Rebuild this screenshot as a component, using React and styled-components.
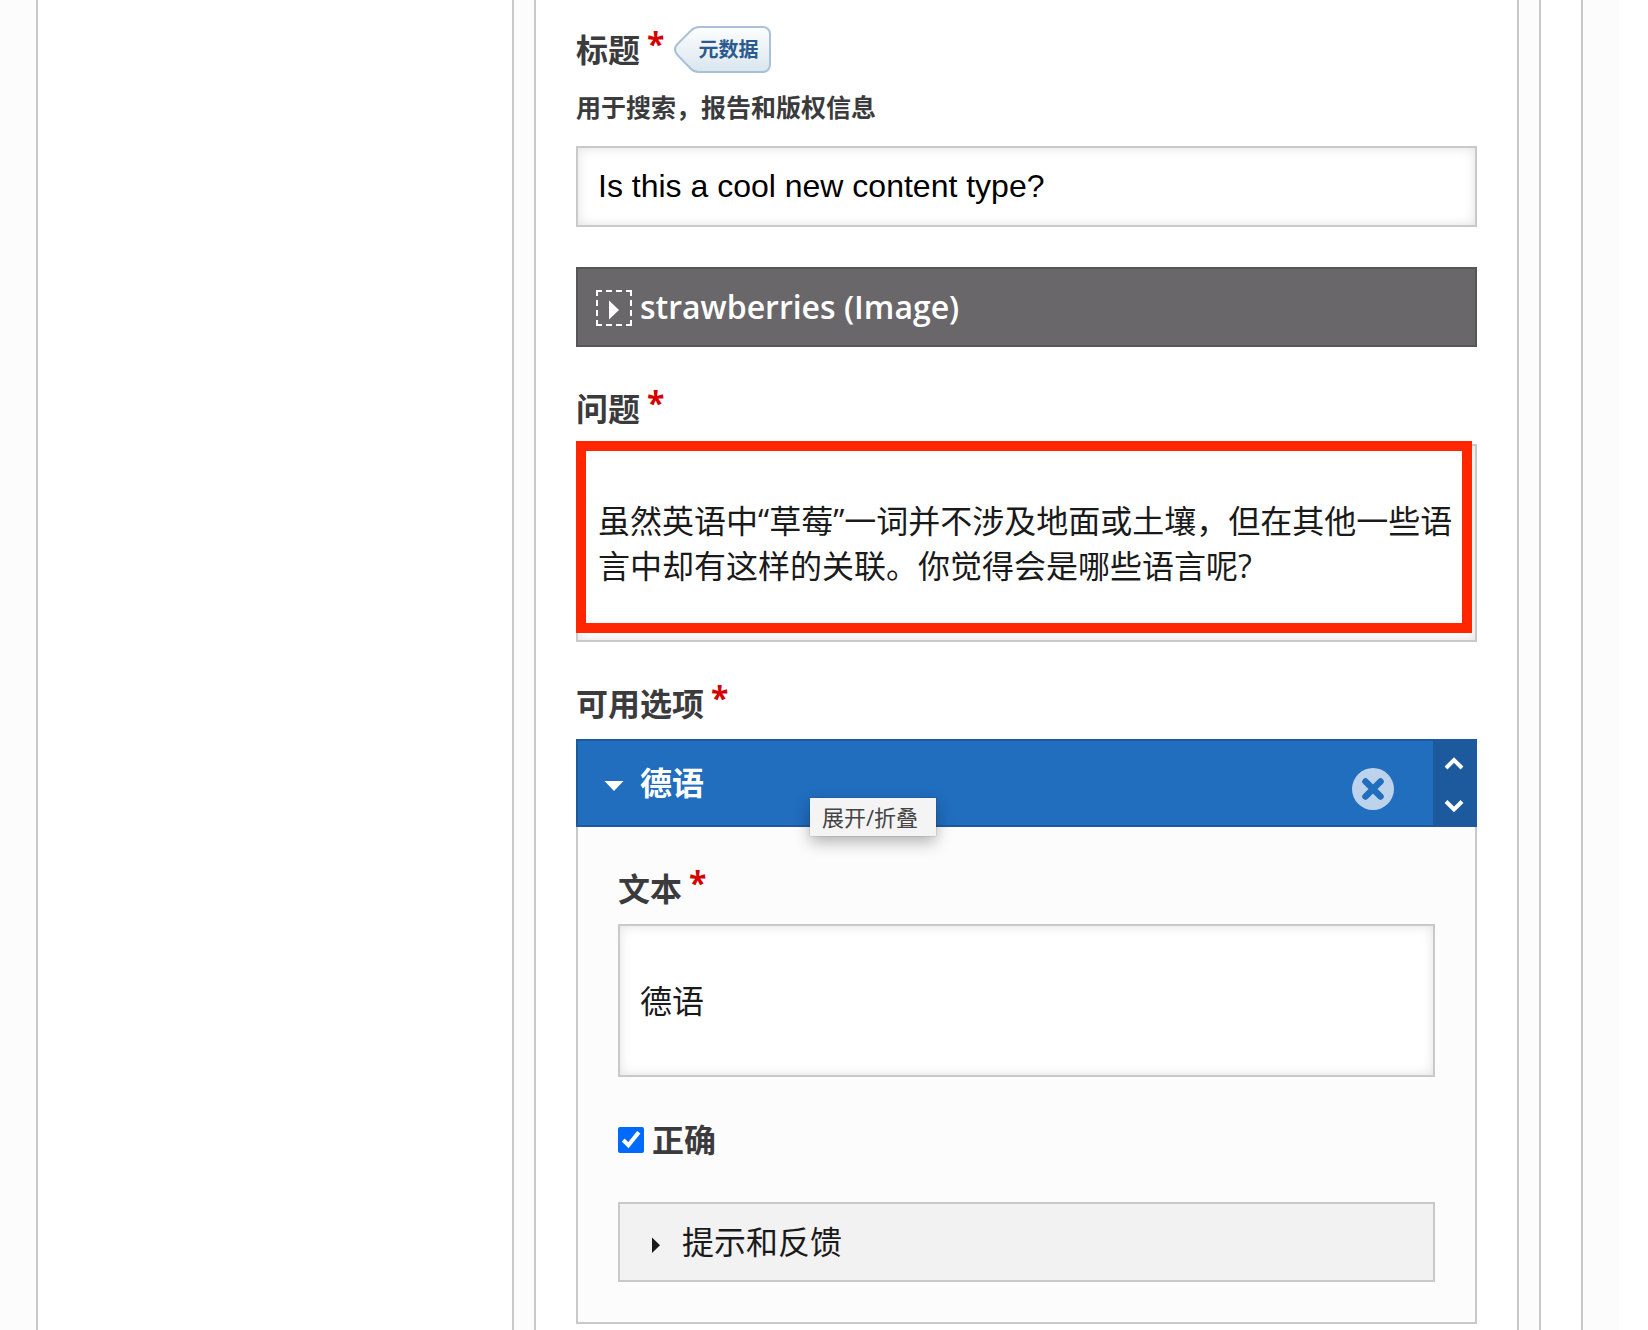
import { useState } from "react";
import styled, { createGlobalStyle, css } from "styled-components";

const GlobalStyle = createGlobalStyle`
  *, *::before, *::after {
    box-sizing: border-box;
  }

  body {
    margin: 0;
    background-color: #fff;
    color: #1a1a1a;
    font-family: "Open Sans", "Noto Sans CJK SC", sans-serif;
    font-size: 32px;
    line-height: 44px;
  }

  button, input, textarea {
    margin: 0;
    font: inherit;
    color: inherit;
  }

  button {
    border: none;
    background: none;
    padding: 0;
    cursor: pointer;
  }
`;

const Page = styled.div`
  display: flex;
  min-height: 100vh;
  margin-right: 29px;
  padding: 0 36px;
  background-color: #fcfcfc;
`;

const Workspace = styled.div`
  flex: 1;
  display: grid;
  grid-template-columns: 474px 1fr;
  padding-right: 40px;
  border: solid #c9c9c9;
  border-width: 0 2px;
  background-color: #fff;
`;

const Outline = styled.aside`
  background-color: #fff;
`;

const Frame = styled.main`
  display: flex;
  min-width: 0;
  padding: 0 20px;
  border: solid #c9c9c9;
  border-width: 0 2px;
  background-color: #fcfcfc;
`;

const Form = styled.form`
  flex: 1;
  min-width: 0;
  display: flex;
  flex-direction: column;
  gap: 40px;
  padding: 26px 40px 0;
  border: solid #c9c9c9;
  border-width: 0 2px;
  background-color: #fff;
`;

const Field = styled.div`
  display: flex;
  flex-direction: column;
`;

const LabelRow = styled.div`
  display: flex;
  align-items: center;
  gap: 10px;
  margin-bottom: ${(props) => (props.$tight ? "0" : "13px")};
`;

const Label = styled.label`
  color: #3b3b3d;
  font-weight: 700;
`;

const Required = styled.span`
  margin-left: 7px;
  color: #d60000;
  line-height: 0;
  vertical-align: 6px;
`;

const Hint = styled.p`
  margin: 17px 0 22px;
  color: #3b3b3d;
  font-size: 25px;
  font-weight: 600;
  line-height: 34px;
`;

const Tag = styled.span`
  position: relative;
  display: flex;
  align-items: center;
  width: 97px;
  height: 47px;
  padding-left: 24px;
  color: #2a5a8f;
  font-size: 20px;
  font-weight: 600;

  svg {
    position: absolute;
    inset: 0;
  }

  span {
    position: relative;
  }
`;

const box = css`
  display: block;
  width: 100%;
  border: 2px solid #c9c9c9;
  border-radius: 0;
  outline: none;
  background-color: #fff;
  box-shadow: inset 0 0 12px rgba(0, 0, 0, 0.12);
`;

const TextInput = styled.input`
  ${box}
  height: 81px;
  padding: 0 20px;
  color: #000;
  font-family: "Liberation Sans", Arial, sans-serif;
`;

const TextArea = styled.textarea`
  ${box}
  padding: 52px 20px;
  line-height: 45px;
  overflow: hidden;
  resize: none;
`;

const Highlighted = styled.div`
  position: relative;
`;

const Highlight = styled.div`
  position: absolute;
  inset: -3px 5px 9px 0;
  border: 10px solid #ff2600;
  pointer-events: none;
`;

const bars = {
  dark: css`
    border-color: #575558;
    background-color: #6a676a;
    color: #fff;
    font-weight: 600;
  `,
  blue: css`
    border-color: #1d5a9d;
    background-color: #216dbe;
    color: #fff;
    font-weight: 600;
  `,
  light: css`
    border-color: #c9c9c9;
    background-color: #f2f2f2;
  `,
};

const Bar = styled.div`
  position: relative;
  display: flex;
  min-height: ${(props) => (props.$tall ? "88px" : "80px")};
  border: 2px solid;
  ${(props) => bars[props.$variant]}
`;

const Toggle = styled.button`
  flex: 1;
  display: flex;
  align-items: center;
  gap: 8px;
  padding-left: 18px;
  text-align: left;

  svg {
    margin-top: 2px;
  }
`;

const RemoveButton = styled.button`
  display: flex;
  align-items: flex-end;
  padding: 0 39px 15px;
`;

const Order = styled.div`
  display: flex;
  flex-direction: column;
  width: 42px;
  background-color: #1d5a9d;
`;

const OrderButton = styled.button`
  flex: 1;
  display: flex;
  align-items: center;
  justify-content: center;
  padding-top: 4px;
`;

const Tooltip = styled.div`
  position: absolute;
  top: 57px;
  left: 232px;
  z-index: 1;
  min-width: 126px;
  padding: 0 12px;
  background-color: #f4f4f4;
  box-shadow: 0 0 1px rgba(0, 0, 0, 0.4), 0 6px 16px rgba(0, 0, 0, 0.3);
  color: #444;
  font-size: 22px;
  font-weight: 400;
  line-height: 38px;
`;

const Panel = styled.div`
  display: flex;
  flex-direction: column;
  gap: 40px;
  padding: 40px;
  border: 2px solid #c9c9c9;
  border-top: none;
  background-color: #fcfcfc;
`;

const CheckRow = styled.div`
  display: flex;
  align-items: center;
  gap: 8px;
  min-height: 45px;
`;

const Checkbox = styled.input`
  width: 26px;
  height: 26px;
  accent-color: #006aff;
`;

function Caret({ open, small, dashed }) {
  let d = "M13 10.500v19l10-9.500z";
  if (open) d = "M8.500 15h19l-9.500 10z";
  if (small) d = "M14 12.500v15.500l8-7.750z";

  return (
    <svg width="36" height="36" viewBox="0 0 36 36" aria-hidden="true">
      {dashed && (
        <path
          d="M0 1H36M0 35H36M1 0V36M35 0V36"
          stroke="currentColor"
          strokeWidth="2"
          strokeDasharray="6 4"
        />
      )}
      <path d={d} fill="currentColor" />
    </svg>
  );
}

function TagShape() {
  return (
    <svg width="97" height="47" viewBox="0 0 97 47" aria-hidden="true">
      <defs>
        <linearGradient id="tag" x1="0" y1="0" x2="0" y2="1">
          <stop offset="0" stopColor="#fdfefe" />
          <stop offset="1" stopColor="#d9e6ee" />
        </linearGradient>
      </defs>
      <path
        d="M25 1H89a7 7 0 0 1 7 7V39a7 7 0 0 1-7 7H25Q20 46 17 43L3.500 29Q-1.500 23.500 3.500 18L17 4.500Q21 1 25 1z"
        fill="url(#tag)"
        stroke="#a9c0d8"
        strokeWidth="2"
      />
    </svg>
  );
}

function Chevron({ down }) {
  return (
    <svg width="20" height="14" viewBox="0 0 20 14" aria-hidden="true">
      <path
        d={down ? "M2 2.500l8 8 8-8" : "M2 11l8-8 8 8"}
        fill="none"
        stroke="#fff"
        strokeWidth="4"
      />
    </svg>
  );
}

function RemoveIcon() {
  return (
    <svg width="42" height="42" viewBox="0 0 42 42" aria-hidden="true">
      <circle cx="21" cy="21" r="21" fill="#bcd3eb" />
      <path
        d="M13.500 13.500l15 15M28.500 13.500l-15 15"
        stroke="#216dbe"
        strokeWidth="6.500"
        strokeLinecap="round"
      />
    </svg>
  );
}

function FieldLabel({ htmlFor, children, tight, tag }) {
  return (
    <LabelRow $tight={tight}>
      <Label htmlFor={htmlFor}>
        {children}
        <Required>*</Required>
      </Label>
      {tag && (
        <Tag>
          <TagShape />
          <span>{tag}</span>
        </Tag>
      )}
    </LabelRow>
  );
}

function AnswerOption() {
  const [correct, setCorrect] = useState(true);

  return (
    <>
      <Bar $variant="blue" $tall>
        <Toggle type="button" id="options" aria-expanded="true">
          <Caret open />
          德语
        </Toggle>
        <RemoveButton type="button" aria-label="删除">
          <RemoveIcon />
        </RemoveButton>
        <Order>
          <OrderButton type="button" aria-label="上移">
            <Chevron />
          </OrderButton>
          <OrderButton type="button" aria-label="下移">
            <Chevron down />
          </OrderButton>
        </Order>
        <Tooltip role="tooltip">展开/折叠</Tooltip>
      </Bar>
      <Panel>
        <Field>
          <FieldLabel htmlFor="text">文本</FieldLabel>
          <TextArea id="text" rows={1} defaultValue="德语" />
        </Field>
        <CheckRow>
          <Checkbox
            type="checkbox"
            id="correct"
            checked={correct}
            onChange={(e) => setCorrect(e.target.checked)}
          />
          <Label htmlFor="correct">正确</Label>
        </CheckRow>
        <Bar $variant="light">
          <Toggle type="button" aria-expanded="false">
            <Caret small />
            提示和反馈
          </Toggle>
        </Bar>
      </Panel>
    </>
  );
}

function App() {
  return (
    <>
      <GlobalStyle />
      <Page>
        <Workspace>
          <Outline />
          <Frame>
            <Form>
              <Field>
                <FieldLabel htmlFor="title" tag="元数据" tight>
                  标题
                </FieldLabel>
                <Hint>用于搜索，报告和版权信息</Hint>
                <TextInput
                  id="title"
                  type="text"
                  defaultValue="Is this a cool new content type?"
                />
              </Field>

              <Bar $variant="dark">
                <Toggle type="button" aria-expanded="false">
                  <Caret dashed />
                  strawberries (Image)
                </Toggle>
              </Bar>

              <Field>
                <FieldLabel htmlFor="question">问题</FieldLabel>
                <Highlighted>
                  <TextArea
                    id="question"
                    rows={2}
                    defaultValue="虽然英语中“草莓”一词并不涉及地面或土壤，但在其他一些语言中却有这样的关联。你觉得会是哪些语言呢?"
                  />
                  <Highlight />
                </Highlighted>
              </Field>

              <Field>
                <FieldLabel htmlFor="options">可用选项</FieldLabel>
                <AnswerOption />
              </Field>
            </Form>
          </Frame>
        </Workspace>
      </Page>
    </>
  );
}

export default App;
